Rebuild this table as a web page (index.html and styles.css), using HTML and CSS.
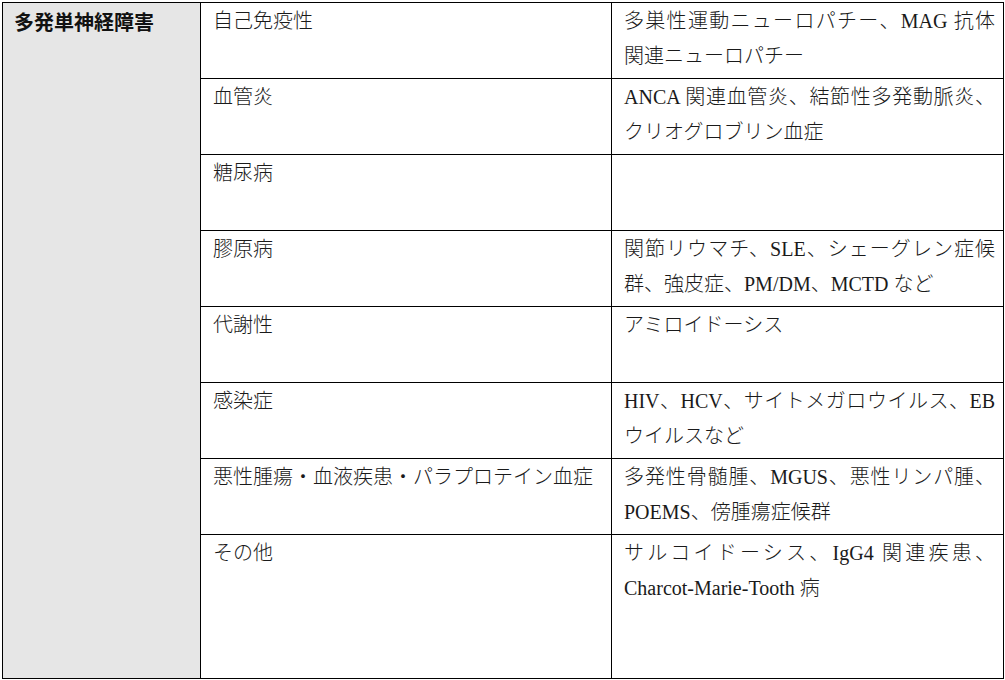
FILE: index.html
```html
<!DOCTYPE html>
<html lang="ja">
<head>
<meta charset="utf-8">
<link rel="stylesheet" href="styles.css">
</head>
<body>
<table class="tbl">
  <colgroup>
    <col class="c1"><col class="c2"><col class="c3">
  </colgroup>
  <tbody>
    <tr>
      <th class="head" rowspan="8">多発単神経障害</th>
      <td class="cat">自己免疫性</td>
      <td class="desc">多巣性運動ニューロパチー、MAG 抗体関連ニューロパチー</td>
    </tr>
    <tr>
      <td class="cat">血管炎</td>
      <td class="desc">ANCA 関連血管炎、結節性多発動脈炎、クリオグロブリン血症</td>
    </tr>
    <tr>
      <td class="cat">糖尿病</td>
      <td class="desc"></td>
    </tr>
    <tr>
      <td class="cat">膠原病</td>
      <td class="desc">関節リウマチ、SLE、シェーグレン症候群、強皮症、PM/DM、MCTD など</td>
    </tr>
    <tr>
      <td class="cat">代謝性</td>
      <td class="desc">アミロイドーシス</td>
    </tr>
    <tr>
      <td class="cat">感染症</td>
      <td class="desc">HIV、HCV、サイトメガロウイルス、EB ウイルスなど</td>
    </tr>
    <tr>
      <td class="cat">悪性腫瘍・血液疾患・パラプロテイン血症</td>
      <td class="desc">多発性骨髄腫、MGUS、悪性リンパ腫、POEMS、傍腫瘍症候群</td>
    </tr>
    <tr class="last">
      <td class="cat">その他</td>
      <td class="desc">サルコイドーシス、IgG4 関連疾患、Charcot-Marie-Tooth 病</td>
    </tr>
  </tbody>
</table>
</body>
</html>
```
FILE: styles.css
```css
html, body {
  margin: 0;
  padding: 0;
  background: #ffffff;
}
body {
  padding: 2px 0 0 2px;
  font-family: "Liberation Serif", "Noto Sans CJK JP", serif;
  color: #1a1a1a;
}
.tbl {
  border-collapse: collapse;
  table-layout: fixed;
  width: 1001px;
}
.c1 { width: 198px; }
.c2 { width: 411px; }
.c3 { width: 392px; }
.tbl th,
.tbl td {
  border: 1px solid #000;
  vertical-align: top;
  font-size: 20px;
  line-height: 35px;
  height: 70px;
  padding: 1px 8px 4px 12px;
}
.tbl .head {
  background: #e6e6e6;
  font-family: "Noto Sans CJK JP", sans-serif;
  font-weight: 700;
  text-align: left;
  padding-left: 11px;
  font-size: 20px;
  color: #111;
}
.cat {
  font-weight: 300;
}
.desc {
  text-align: justify;
  font-weight: 300;
}
.last td {
  height: 138px;
}
```
